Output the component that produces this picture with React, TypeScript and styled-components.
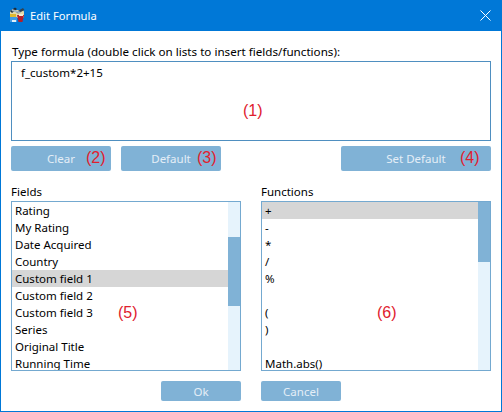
import styled, { createGlobalStyle } from 'styled-components';

const GlobalStyle = createGlobalStyle`
  html, body {
    margin: 0;
    padding: 0;
    background: #fff;
  }
  * {
    box-sizing: border-box;
  }
`;

const fields = [
  'Rating',
  'My Rating',
  'Date Acquired',
  'Country',
  'Custom field 1',
  'Custom field 2',
  'Custom field 3',
  'Series',
  'Original Title',
  'Running Time',
];

const functions = ['+', '-', '*', '/', '%', '', '(', ')', '', 'Math.abs()'];

function AppIcon() {
  return (
    <svg width="16" height="16" viewBox="0 0 16 16">
      <rect x="1" y="3" width="14" height="8" rx="2" fill="#e4d9a8" />
      <path d="M1 4 L6 0.5 L8 2 L3 6 Z" fill="#1f2c38" />
      <path d="M7 5 L14 1 L15.5 3 L9 6.5 Z" fill="#33424f" />
      <path d="M3 2 L12 5 L11 6.5 L2.5 4 Z" fill="#9fb4c2" />
      <rect x="1" y="7" width="6" height="3" fill="#e0b92e" />
      <rect x="1" y="10" width="7" height="5" fill="#3f9ce6" />
      <rect x="3" y="13" width="4" height="2" fill="#dff0fb" />
      <path d="M8 8 H15 L13.5 15 H9.5 Z" fill="#b4202a" />
      <rect x="10" y="7" width="4" height="2" fill="#f3ecd0" />
    </svg>
  );
}

export default function App() {
  return (
    <>
      <GlobalStyle />
      <Window>
        <TitleBar>
          <AppIcon />
          <Title>Edit Formula</Title>
          <CloseIcon width="11" height="11" viewBox="0 0 11 11">
            <path d="M0.5 0.5 L10.5 10.5 M10.5 0.5 L0.5 10.5" stroke="#fff" strokeWidth="1" fill="none" />
          </CloseIcon>
        </TitleBar>
        <Body>
          <Label>Type formula (double click on lists to insert fields/functions):</Label>
          <FormulaBox>
            f_custom*2+15
            <Note $left={231} $top={40}>(1)</Note>
          </FormulaBox>
          <ButtonRow>
            <Button $width={100}>
              <ButtonText>Clear</ButtonText>
              <Note $left={75} $top={3}>(2)</Note>
            </Button>
            <Button $width={100}>
              <ButtonText>Default</ButtonText>
              <Note $left={76} $top={3}>(3)</Note>
            </Button>
            <Spacer />
            <Button $width={150}>
              <ButtonText>Set Default</ButtonText>
              <Note $left={119} $top={3}>(4)</Note>
            </Button>
          </ButtonRow>
          <Columns>
            <Column>
              <ColumnLabel>Fields</ColumnLabel>
              <ListBox>
                <Rows>
                  {fields.map((item, i) => (
                    <Row key={i} $selected={i === 4}>{item}</Row>
                  ))}
                </Rows>
                <ScrollTrack>
                  <ScrollThumb $top={35} $height={69} />
                </ScrollTrack>
                <Note $left={106} $top={102}>(5)</Note>
              </ListBox>
            </Column>
            <Column>
              <ColumnLabel>Functions</ColumnLabel>
              <ListBox>
                <Rows>
                  {functions.map((item, i) => (
                    <Row key={i} $selected={i === 0}>{item}</Row>
                  ))}
                </Rows>
                <ScrollTrack>
                  <ScrollThumb $top={0} $height={60} />
                </ScrollTrack>
                <Note $left={115} $top={102}>(6)</Note>
              </ListBox>
            </Column>
          </Columns>
          <Footer>
            <FooterButton>Ok</FooterButton>
            <FooterButton>Cancel</FooterButton>
          </Footer>
        </Body>
      </Window>
    </>
  );
}

const Window = styled.div`
  width: 502px;
  height: 412px;
  display: flex;
  flex-direction: column;
  border: 1px solid #0078d7;
  background: #fff;
  font-family: 'Noto Sans', 'Open Sans', sans-serif;
  font-size: 11.5px;
  color: #000;
`;

const TitleBar = styled.div`
  height: 30px;
  flex: none;
  display: flex;
  align-items: center;
  padding: 0 10px 2px 8px;
  background: #0078d7;
  color: #fff;
`;

const Title = styled.div`
  margin-left: 5px;
  font-size: 11.2px;
  flex: 1;
`;

const CloseIcon = styled.svg`
  display: block;
`;

const Body = styled.div`
  flex: 1;
  display: flex;
  flex-direction: column;
  padding: 12px 10px 0;
`;

const Label = styled.div`
  height: 18px;
  line-height: 17px;
  padding-left: 1px;
  font-size: 11.65px;
`;

const FormulaBox = styled.div`
  position: relative;
  height: 80px;
  border: 1px solid #4f8fc0;
  padding: 3px 9px;
  line-height: 16px;
`;

const ButtonRow = styled.div`
  display: flex;
  gap: 10px;
  margin-top: 5px;
`;

const Spacer = styled.div`
  flex: 1;
`;

const Button = styled.div<{ $width: number }>`
  position: relative;
  width: ${({ $width }) => $width}px;
  height: 25px;
  background: #80b2d6;
  border-radius: 2px;
  color: #e4eef6;
  display: flex;
  align-items: center;
  justify-content: center;
  font-size: 11.5px;
`;

const ButtonText = styled.span`
  display: block;
`;

const Note = styled.span<{ $left: number; $top: number }>`
  position: absolute;
  left: ${({ $left }) => $left}px;
  top: ${({ $top }) => $top}px;
  font-family: 'Liberation Sans', Arial, sans-serif;
  font-size: 16px;
  line-height: 18px;
  color: #e0202e;
`;

const Columns = styled.div`
  display: flex;
  justify-content: space-between;
  margin-top: 12px;
`;

const Column = styled.div`
  width: 230px;
  display: flex;
  flex-direction: column;
`;

const ColumnLabel = styled.div`
  height: 18px;
  line-height: 18px;
`;

const ListBox = styled.div`
  position: relative;
  height: 170px;
  border: 1px solid #74a9d0;
  display: flex;
  overflow: hidden;
`;

const Rows = styled.div`
  flex: 1;
  overflow: hidden;
`;

const Row = styled.div<{ $selected: boolean }>`
  height: 17px;
  line-height: 17px;
  padding-left: 3px;
  background: ${({ $selected }) => ($selected ? '#d6d6d6' : 'transparent')};
  white-space: nowrap;
`;

const ScrollTrack = styled.div`
  position: relative;
  width: 12px;
  flex: none;
  background: #e6f3fc;
`;

const ScrollThumb = styled.div<{ $top: number; $height: number }>`
  position: absolute;
  left: 0;
  right: 0;
  top: ${({ $top }) => $top}px;
  height: ${({ $height }) => $height}px;
  background: #80b2d6;
`;

const Footer = styled.div`
  display: flex;
  justify-content: center;
  gap: 20px;
  margin-top: 10px;
`;

const FooterButton = styled.div`
  width: 80px;
  height: 20px;
  background: #80b2d6;
  border-radius: 2px;
  color: #e4eef6;
  display: flex;
  align-items: center;
  justify-content: center;
  font-size: 11.5px;
`;
